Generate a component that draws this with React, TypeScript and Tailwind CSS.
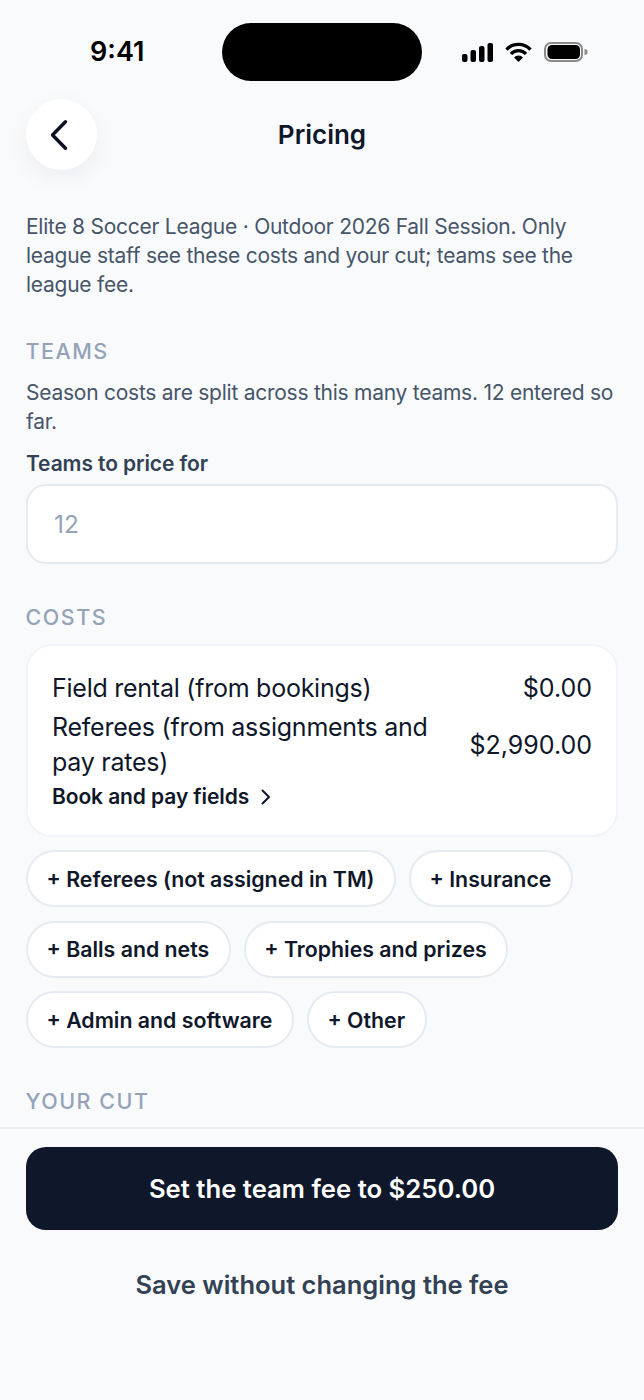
import React from "react";

function Chip({ label }: { label: string }) {
  return (
    <div className="h-[57px] flex items-center rounded-full bg-white border-2 border-[#e6ebf2] pl-[18.5px] pr-[19.5px] pt-[2px] text-[21.3px] font-semibold text-[#0f172a] whitespace-nowrap">
      {label}
    </div>
  );
}

function Label({ children, className }: { children: React.ReactNode; className: string }) {
  return (
    <div className={`text-[21.5px] leading-[26px] font-medium tracking-[1.5px] -ml-[0.5px] text-[#94a3b8] ${className}`}>
      {children}
    </div>
  );
}

export default function App() {
  return (
    <div className="w-[644px] h-[1400px] overflow-hidden flex flex-col bg-[#f8fafc] font-['Inter',sans-serif] text-[#0f172a]">
      <div className="h-[1127px] shrink-0 overflow-hidden px-[26px]">
        <div className="h-[99px] flex items-start justify-between pt-[23px] -mx-[26px] pl-[90px] pr-[56px]">
          <div className="w-[54px] h-[58px] flex items-center text-[27px] font-semibold text-black">9:41</div>
          <div className="w-[200px] h-[58px] rounded-[29px] bg-black ml-[78px]" />
          <div className="flex items-center h-[58px] ml-auto">
            <svg width="126" height="24" viewBox="0 0 126 24" className="block">
              <rect x="0" y="14" width="5.5" height="8" rx="2" fill="#000" />
              <rect x="8.5" y="10" width="5.5" height="12" rx="2" fill="#000" />
              <rect x="17" y="6" width="5.5" height="16" rx="2" fill="#000" />
              <rect x="25.5" y="3" width="5.5" height="19" rx="2" fill="#000" />
              <path d="M44.5 9.6 A16.5 16.5 0 0 1 68.5 9.6" fill="none" stroke="#000" strokeWidth="3.4" />
              <path d="M49 14 A10 10 0 0 1 64 14" fill="none" stroke="#000" strokeWidth="3.4" />
              <path d="M52 17.6 L56.5 22 L61 17.6 A6 6 0 0 0 52 17.6 Z" fill="#000" />
              <rect x="83" y="3" width="37" height="18" rx="6" fill="none" stroke="#8a8a8a" strokeWidth="2" />
              <rect x="85.5" y="5" width="32.5" height="14" rx="4.5" fill="#000" />
              <path d="M122.5 9 A3 3 0 0 1 122.5 15 Z" fill="#8a8a8a" />
            </svg>
          </div>
        </div>
        <div className="relative h-[71px] flex items-center justify-center">
          <div className="absolute left-0 top-0 w-[71px] h-[71px] rounded-full bg-white shadow-[0_8px_24px_rgba(15,23,42,0.05)] flex items-center justify-center">
            <svg width="24" height="34" viewBox="0 0 24 34" fill="none">
              <path d="M15.5 3.7 L2.5 17 L15.5 30.3" stroke="#0b1120" strokeWidth="3.4" strokeLinecap="round" strokeLinejoin="round" />
            </svg>
          </div>
          <div className="text-[26px] font-semibold text-[#0f172a]">Pricing</div>
        </div>
        <p className="mt-[42px] text-[21px] leading-[29px] tracking-[-0.25px] text-[#475569]">
          Elite 8 Soccer League · Outdoor 2026 Fall Session. Only league staff see these costs and your cut; teams see the league fee.
        </p>
        <Label className="mt-[39px]">TEAMS</Label>
        <p className="mt-[14px] text-[21px] leading-[29px] tracking-[-0.25px] text-[#475569]">
          Season costs are split across this many teams. 12 entered so far.
        </p>
        <div className="mt-[15px] text-[21px] leading-[26px] font-semibold tracking-[-0.1px] text-[#334155]">Teams to price for</div>
        <div className="mt-[7px] h-[80px] rounded-[20px] bg-white border-2 border-[#e6ebf2] flex items-center px-[26px] text-[24.5px] text-[#94a3b8]">12</div>
        <Label className="mt-[40px]">COSTS</Label>
        <div className="mt-[14px] h-[193px] rounded-[26px] bg-white border-2 border-[#f1f5f9] px-[24px] pt-[24px]">
          <div className="flex justify-between items-center h-[36px] text-[25px] leading-[36px] text-[#0f172a]">
            <span className="tracking-[-0.25px]">Field rental (from bookings)</span>
            <span>$0.00</span>
          </div>
          <div className="flex justify-between items-center text-[25px] leading-[35px] text-[#0f172a] mt-[4px]">
            <span className="w-[400px] tracking-[-0.25px]">Referees (from assignments and pay rates)</span>
            <span>$2,990.00</span>
          </div>
          <div className="flex items-center gap-[11px] mt-[3px] h-[28px] text-[21px] tracking-[-0.1px] font-semibold text-[#0f172a]">
            <span>Book and pay fields</span>
            <svg width="12" height="18" viewBox="0 0 12 18" fill="none">
              <path d="M2.5 2.5 L9 9 L2.5 15.5" stroke="#0f172a" strokeWidth="2" strokeLinecap="round" strokeLinejoin="round" />
            </svg>
          </div>
        </div>
        <div className="mt-[13px] flex flex-wrap gap-x-[13px] gap-y-[13.5px]">
          <Chip label="+ Referees (not assigned in TM)" />
          <Chip label="+ Insurance" />
          <Chip label="+ Balls and nets" />
          <Chip label="+ Trophies and prizes" />
          <Chip label="+ Admin and software" />
          <Chip label="+ Other" />
        </div>
        <Label className="mt-[40px]">YOUR CUT</Label>
      </div>
      <div className="border-t-2 border-[#eef2f6] px-[26px] pt-[18px] flex-1">
        <div className="h-[83px] rounded-[20px] bg-[#0f172a] pt-[2px] flex items-center justify-center text-[25.7px] font-semibold text-white">
          Set the team fee to $250.00
        </div>
        <div className="mt-[35px] text-center text-[25.5px] leading-[40px] font-semibold text-[#334155]">Save without changing the fee</div>
      </div>
    </div>
  );
}
